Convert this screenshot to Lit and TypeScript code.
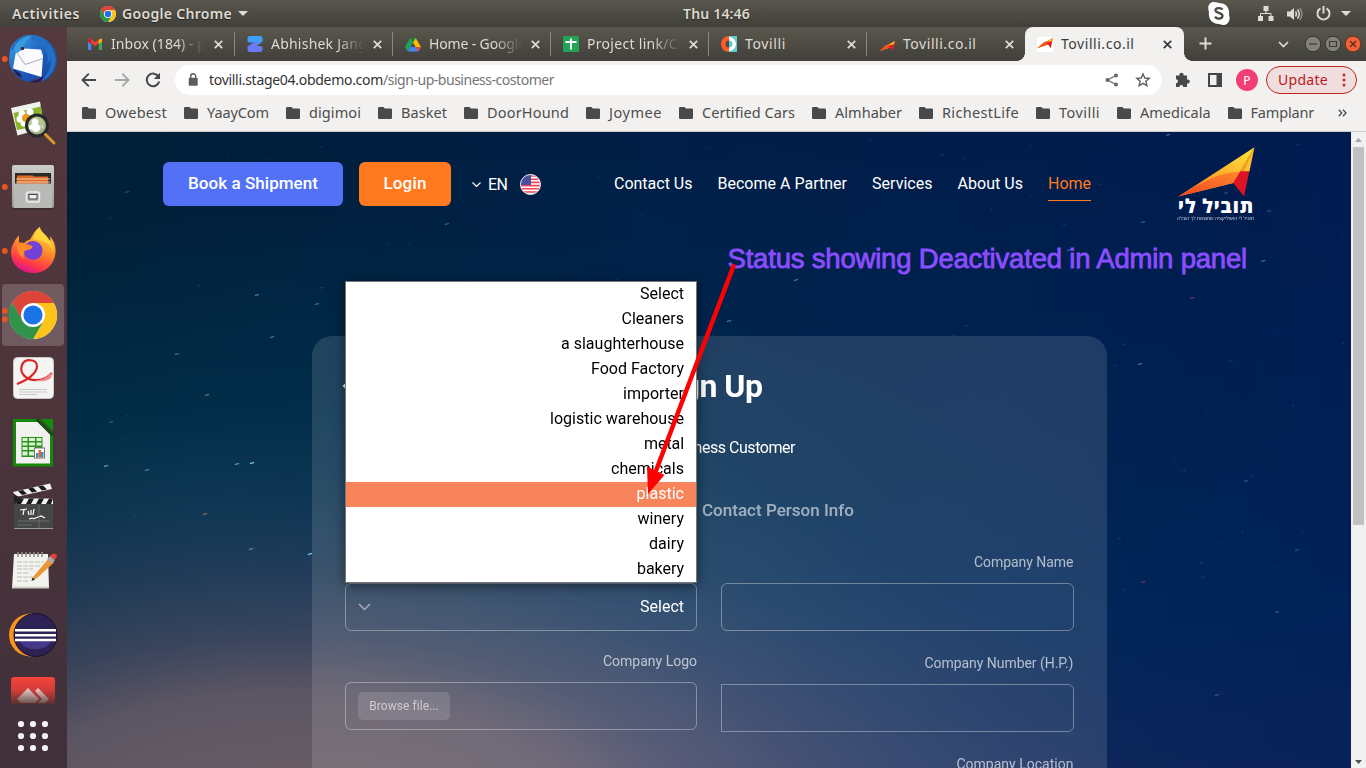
import { LitElement, html, svg, css } from "lit";
import { customElement, property } from "lit/decorators.js";
import { classMap } from "lit/directives/class-map.js";

/** A single line of text whose letter-spacing is computed so it fills `w` pixels. */
@customElement("fit-text")
class FitText extends LitElement {
  @property({ type: Number }) w = 0;
  @property() text = "";
  static styles = css`
    :host { display: block; flex: none; white-space: pre; }
    .t { display: inline-block; white-space: pre; }
  `;
  render() {
    return html`<span class="t">${this.text}</span>`;
  }
  updated() {
    const el = this.renderRoot.querySelector(".t") as HTMLElement;
    el.style.letterSpacing = "0px";
    const n = Array.from(this.text).length;
    const ls = (this.w - el.getBoundingClientRect().width) / n;
    el.style.letterSpacing = ls.toFixed(3) + "px";
  }
}

const chrome = svg`
  <circle cx="24" cy="24" r="24" fill="#fff"/>
  <path d="M24 24 3.2 12A24 24 0 0 1 44.8 12Z" fill="#dd4538"/>
  <path d="M3.2 12A24 24 0 0 0 24 48L34.4 30 24 24 13.6 30Z" fill="#2f9449"/>
  <path d="M44.8 12A24 24 0 0 1 24 48L34.4 30 24 12Z" fill="#fcc31a"/>
  <path d="M3.2 12A24 24 0 0 1 44.8 12H24L13.6 30Z" fill="#dd4538"/>
  <path d="M3.2 12A24 24 0 0 0 24 48L34.4 30 24 24 13.6 30Z" fill="#2f9449"/>
  <circle cx="24" cy="24" r="12" fill="#fff"/><circle cx="24" cy="24" r="9.6" fill="#1b73e8"/>`;

const plane = svg`
  <path d="M0 15.2 16 5 11.5 11.6Z" fill="#ff8a1c"/>
  <path d="M0 15.2 6.8 9.3 13.5 7 11.5 11.6Z" fill="#f4511e"/>
  <path d="M8.5 9 16 5 13.8 15.2 11.3 11.8Z" fill="#e01d25"/>
  <path d="M3 12.6 16 5 14.9 8.3 7.5 9.7Z" fill="#ffc21f"/>`;

const dock = [
  {
    dots: 1,
    art: svg`
      <defs><linearGradient id="tb" x1="0" y1="0" x2="1" y2="1"><stop offset="0" stop-color="#3fa9f0"/><stop offset=".5" stop-color="#1c5fbf"/><stop offset="1" stop-color="#1b3f96"/></linearGradient></defs>
      <path d="M10 22C14 14 20 9 29 8 44 7 57 18 57 33c0 10-6 18-15 22l2-4-8 4 1-4-8 4C18 53 9 44 9 32Z" fill="url(#tb)"/>
      <path d="M13 42c4 2 8 3 9 9-5-2-8-5-9-9ZM30 54c6 0 9-2 14-6l-3 6c-4 2-8 2-11 0Z" fill="#231a5c"/>
      <path d="M18 20c1-6 6-11 14-12l-1 5c8 2 12 8 12 18 2-5 1-8-1-12 5 5 7 12 5 19l4-6c0 9-4 17-10 22 12-4 18-18 13-29C49 13 39 7 29 8 19 9 12 16 10 24Z" fill="#246fc6"/>
      <path d="M16 24 24 21.500 41 22.500 43 29 41.500 50 13 41.500Z" fill="#fafafc"/>
      <path d="M16 24 25 37.500 43 31.500" stroke="#a9acb4" stroke-width="1" fill="none"/>
      <path d="M14 21c3-7 9-11 16-12l-4 5-4 9-7 4Z" fill="#3b9bdf"/>
      <circle cx="22.500" cy="21.500" r="1.800" fill="#3a2c2c"/>`,
  },
  {
    dots: 0,
    art: svg`
      <path d="M11 17 40 10.500 44 37 17.500 44.500Z" fill="#eef1ee"/>
      <path d="M13.500 22 41 15.500 43.500 34 17 39Z" fill="#8cb52e"/>
      <g fill="#fff"><circle cx="22" cy="23" r="3.500"/><circle cx="30" cy="21" r="3.500"/><circle cx="20" cy="28" r="3.500"/><circle cx="24" cy="32" r="3.500"/></g>
      <circle cx="26" cy="27" r="4" fill="#ec9a1c"/>
      <circle cx="37" cy="34.500" r="10.500" fill="#b9c7a0" fill-opacity=".85" stroke="#26282a" stroke-width="3"/>
      <g fill="#fff"><circle cx="35" cy="31" r="3.500"/><circle cx="36" cy="37" r="4"/><circle cx="31.500" cy="36" r="2.500"/></g>
      <path d="M45.500 43.500 54 52" stroke="#d99a2b" stroke-width="3" stroke-linecap="round"/>`,
  },
  {
    dots: 1,
    art: svg`
      <defs><linearGradient id="fl" x1="0" y1="0" x2="0" y2="1"><stop offset="0" stop-color="#cdcdcb"/><stop offset="1" stop-color="#9a9a98"/></linearGradient></defs>
      <rect x="12" y="10" width="42" height="43" rx="2" fill="url(#fl)"/>
      <rect x="15" y="18" width="36" height="11" fill="#2c2a28"/>
      <path d="M17 20.500h16l1 1h14v8H17Z" fill="#df6b28"/>
      <path d="M16 24h34M16 27h34" stroke="#f6cfa3" stroke-width="1.200"/>
      <rect x="14" y="28.500" width="38" height="24.500" rx="1.500" fill="#b9b9b7"/>
      <rect x="26.500" y="37" width="13" height="10" rx="2" fill="none" stroke="#ececea" stroke-width="1.500"/>
      <rect x="29" y="39.500" width="8" height="4.500" fill="#efefef" stroke="#444" stroke-width="1"/>
      <path d="M12.500 54H53" stroke="#2d2226" stroke-width="1"/>`,
  },
  {
    dots: 1,
    art: svg`
      <defs><linearGradient id="ff" x1=".8" y1="0" x2=".4" y2="1"><stop offset="0" stop-color="#ffdf3d"/><stop offset=".45" stop-color="#ff9426"/><stop offset=".8" stop-color="#ff3b45"/><stop offset="1" stop-color="#e3158a"/></linearGradient></defs>
      <path d="M19 16.500v7c2 0 3 0 5 .5 2-2 4-3 6-3.500 2-3 5-10 10-12.500 0 4 4 6 7 10l3 4c1-1 0-3 0-5 4 5 6 10 5.500 16C55 45 46 54 33.500 54 20 54 11 45 11 33.500c0-4 1-7 3-10 1-3 3-5 5-7Z" fill="url(#ff)"/>
      <circle cx="33" cy="31.500" r="9.500" fill="#7340d8"/>
      <path d="M17 27c5-3 10-2 15.500 0 0 4-5 3.500-8 5 0 3-2 5-1 8-4-3-6-8-6.500-13Z" fill="#ff8a27"/>
      <path d="M40 8c0 4 4 6 7 10 4 5 6 9 6 15-2-6-5-9-9-10l-11-3c2-3 3-9 7-12Z" fill="#ffd53a"/>`,
  },
  { dots: 2, art: svg`<g transform="translate(9 8)">${chrome}</g>` },
  {
    dots: 0,
    art: svg`
      <rect x="13.500" y="10.500" width="40" height="41" rx="4" fill="#f4f4f3" stroke="#c9c9c8"/>
      <path d="M17 37C28 33 37 26 37 19c0-7-12-8-15-1-3 8 4 16 16 15 5 0 10-3 14-7" stroke="#d8262b" stroke-width="2.200" fill="none"/>
      <path d="M34 33c8 1 13-3 18-8l-1 6c-5 4-11 4-17 2Z" fill="#ee8b86"/>
      <path d="M19 42.500h28M19 45h28M19 47.500h18" stroke="#c7c7c7" stroke-width="1"/>`,
  },
  {
    dots: 0,
    art: svg`
      <path d="M13 8h26l14 14v33.500H13Z" fill="#138a0b"/>
      <path d="M16 11h22l12 12v29.500H16Z" fill="#f1f1f0"/>
      <path d="M40.500 8h12.500v12.500Z" fill="#138a0b"/><path d="M36.500 8 53 24.500" stroke="#184c16" stroke-width="3"/>
      <rect x="21.500" y="26" width="21" height="20" fill="#2b8f1f"/>
      <g fill="#d9f5cf"><path d="M22.500 27h5v3h-5zM29 27h6v3h-6zM36.500 27h5v3h-5zM22.500 31.500h5v3h-5zM29 31.500h6v3h-6zM36.500 31.500h5v3h-5zM22.500 36h5v3h-5zM29 36h6v3h-6zM22.500 40.500h5v4h-5zM29 40.500h6v4h-6z"/></g>
      <rect x="34.500" y="37" width="10" height="10" fill="#fff" stroke="#777"/>
      <path d="M36 42h2.500v4.500H36z" fill="#3d8ccb"/><path d="M38.500 39H41v7.500h-2.500z" fill="#e0681d"/><path d="M41 41h2.500v5.500H41z" fill="#3d8ccb"/>`,
  },
  {
    dots: 0,
    art: svg`
      <path d="M13 17 50 8.500 52 14 16 22Z" fill="#f2f2f2"/>
      <path d="m18 16 5-1 4 4-5 1ZM28 13.500l5-1 4 4-5 1ZM38 11.500l5-1 4 4-5 1Z" fill="#1b1b1b"/>
      <path d="M14 24h39v29H14Z" fill="#444647"/>
      <path d="M14 23.500h39V29H14Z" fill="#f2f2f2"/>
      <path d="m19 23.500 5 0-3 5.500h-5ZM29 23.500h5L31 29h-5ZM39 23.500h5L41 29h-5ZM49 23.500h4L51 29h-5Z" fill="#1b1b1b"/>
      <path d="m14 19 8 5-8 6Z" fill="#222"/>
      <path d="m20 35 7-1M24 35l-1 5M28 36l1 4M31 35v5M34 34l-1 6M29 44l4-1M33 44l8-3 4 2" stroke="#fff" stroke-width="1.200" fill="none"/>
      <path d="M18 46h31M18 50h14M39 30v23" stroke="#777" stroke-width=".8"/>
      <path d="M14 53.500h39" stroke="#9a9a9a"/>`,
  },
  {
    dots: 0,
    art: svg`
      <path d="M14 15h34l1 34H12Z" fill="#f3f3ee"/><path d="M12 48.500h37" stroke="#cfd0c9" stroke-width="2"/>
      <path d="M18 13v5M22 13v5M26 13v5M30 13v5M34 13v5M38 13v5M42 13v5" stroke="#8d8d8a" stroke-width="1.600"/>
      <path d="M17 23h27M17 27h23M17 30h16M17 34h11M17 38h15M17 42h11" stroke="#b9b9b4" stroke-width=".9" stroke-dasharray="5 1"/>
      <path d="m33 38 16-19 5 4.500L37 39l-5 2.500Z" fill="#ed9636"/><path d="m47 20 3-3 5 4-3 3.500Z" fill="#a9a9a9"/>
      <path d="m50 17 2-2c3-2 7 2 4 4l-1.500 2Z" fill="#e2413f"/><path d="m31.500 42 1-3.500 2.500 2Z" fill="#222"/>`,
  },
  {
    dots: 0,
    art: svg`
      <circle cx="30.500" cy="32" r="21.500" fill="#f7941e"/>
      <circle cx="35.500" cy="32" r="21.500" fill="#2c2255" stroke="#160f30" stroke-width="1"/>
      <path d="M20 38c3 11 27 11 31 0Z" fill="#45378a"/>
      <path d="M15 27.300h41M15 32.300h41M15 37h41" stroke="#fff" stroke-width="2.400"/>`,
  },
];

const dockCut = svg`
  <defs><linearGradient id="an" x1="0" y1="0" x2="0" y2="1"><stop offset="0" stop-color="#f5443c"/><stop offset=".5" stop-color="#d23c38"/><stop offset="1" stop-color="#57302f"/></linearGradient>
  <linearGradient id="ag" x1="0" y1="0" x2="0" y2="1"><stop offset="0" stop-color="#f0d0cd"/><stop offset="1" stop-color="#6f5452"/></linearGradient></defs>
  <path d="M11 13a3 3 0 0 1 3-3h38a3 3 0 0 1 3 3v24H11Z" fill="url(#an)"/>
  <path d="m17 32 11-11 11 11-4 4H21ZM35 24l3-3 11 11-4 4h-7l4-4Z" fill="url(#ag)"/>`;

const gmail = svg`<path d="M1 3v11h3.200V7.200L8 10l3.800-2.800V14H15V3l-1.500-1L8 6.200 2.500 2Z" fill="#ea4335"/><path d="M1 5v9h3.200V7.300Z" fill="#4285f4"/><path d="M15 5v9h-3.200V7.300Z" fill="#34a853"/><path d="M15 3.500v2L11.800 8V4.700l1.500-1.700C14.200 2.500 15 3 15 3.500Z" fill="#fbbc04"/><path d="M1 3.500v2L4.200 8V4.700L2.700 3C1.800 2.500 1 3 1 3.500Z" fill="#c5221f"/>`;
const zed = svg`<path d="M2 0h12l1.500 1.500v4L8 11H4.500l3-4.500H2L.5 5V1.500Z" fill="#3fa0fb"/><path d="M14 16H2L.5 14.500v-4L8 5.500h3.500L8.500 10H14l1.500 1.500v3Z" fill="#6b7bf8"/>`;
const drive = svg`<path d="M5.300 2h5.400L16 11h-5.300Z" fill="#fbbc04"/><path d="M5.300 2 8 6.500 2.700 15.400 0 11Z" fill="#1ea362"/><path d="M5.300 11H16l-2.700 4.400H2.700Z" fill="#4285f4"/><path d="m10.700 11 2.600 4.400L16 11Z" fill="#ea4335"/><path d="M5.300 2h5.400L8 6.500Z" fill="#188038"/>`;
const sheet = svg`<rect width="16" height="16" rx="1.500" fill="#23a455"/><path d="M8 2.500v11M2.500 6h11" stroke="#fff" stroke-width="1.800"/>`;
const ring = svg`<path d="M8 0h8v16H8Z" fill="#5fc9cc"/><path d="M8 0a8 8 0 0 0 0 16V11.500a3.500 3.500 0 0 1 0-7Z" fill="#ff5a2b"/><path d="M8 1a7 7 0 0 1 0 14v-3.500a3.500 3.500 0 0 0 0-7Z" fill="#fff"/>`;

const tabs = [
  { icon: gmail, title: "Inbox (184) - p", w: 95, fade: true, first: true },
  { icon: zed, title: "Abhishek Jang", w: 96, fade: true },
  { icon: drive, title: "Home - Google", w: 97, fade: true },
  { icon: sheet, title: "Project link/Cr", w: 97, fade: true },
  { icon: ring, title: "Tovilli", w: 41, fade: false },
  { icon: plane, title: "Tovilli.co.il", w: 73.500, fade: false },
  { icon: svg`<rect y="1" width="16" height="15" fill="#fff"/><g transform="translate(0 -3)">${plane}</g>`, title: "Tovilli.co.il", w: 73.500, fade: false, active: true },
];

const marks: [string, number][] = [
  ["Owebest", 62], ["YaayCom", 62], ["digimoi", 52], ["Basket", 46], ["DoorHound", 82], ["Joymee", 53],
  ["Certified Cars", 93], ["Almhaber", 67], ["RichestLife", 77], ["Tovilli", 41], ["Amedicala", 70.500], ["Famplanr", 63.500],
];

const options: [string, number][] = [
  ["Select", 44], ["Cleaners", 62.500], ["a slaughterhouse", 123], ["Food Factory", 93], ["importer", 61], ["logistic warehouse", 134],
  ["metal", 40], ["chemicals", 73], ["plastic", 47.500], ["winery", 46.500], ["dairy", 35], ["bakery", 47],
];

const nav: [string, number][] = [["Contact Us", 78.500], ["Become A Partner", 129.500], ["Services", 60.500], ["About Us", 65.500], ["Home", 43]];

/** Fixed bright stars, as page coordinates: x, y, colour. */
const brightStars: [number, number, string][] = [
  [1101, 3, "#2467a3"], [1159, 61, "#1c4f86"], [1202, 79, "#38446f"], [1196, 129, "#2f6fa5"], [1073, 232, "#2c71aa"], [1076, 90, "#245a8c"],
  [1125, 166, "#594268"], [1002, 118, "#266aa3"], [662, 189, "#3079ab"], [729, 148, "#3079ab"], [135, 59, "#72715f"], [39, 334, "#579bc4"],
  [80, 338, "#3b83ad"], [185, 331, "#78c0ee"], [243, 422, "#78c0ee"], [170, 332, "#4f94c6"], [138, 382, "#88635f"], [184, 417, "#7e7780"], [1076, 450, "#5a3b63"],
  [190, 163, "#357da0"], [250, 172, "#287099"], [140, 263, "#6a6c64"], [110, 222, "#2e6f8f"], [44, 290, "#315f77"], [205, 205, "#2d7795"],
  [1179, 349, "#20558a"], [1230, 418, "#2a4f84"], [1150, 563, "#3d4c7f"], [1210, 480, "#24558c"], [380, 92, "#21668c"], [60, 60, "#1c506b"],
];

const faintStars = (() => {
  let s = 7;
  const r = () => (s = (s * 16807) % 2147483647) / 2147483647;
  return Array.from({ length: 150 }, () => [r() * 1284, r() * 500, 0.8 + r() * 1.500, 0.06 + r() * 0.24]);
})();

@customElement("app-root")
class AppRoot extends LitElement {
  static styles = css`
    :host { display: block; width: 1366px; height: 768px; overflow: hidden; font-family: Roboto, sans-serif; }
    * { box-sizing: border-box; }
    svg { display: block; flex: none; }
    .screen { display: grid; grid-template: 27px 741px / 67px 1299px; width: 1366px; height: 768px; position: relative; overflow: hidden; }
    .ui { font-family: "Noto Sans", "Open Sans", sans-serif; }
    .topbar { grid-column: 1 / 3; background: linear-gradient(#5b574e, #403f3a); color: #dfdbd2; display: grid; grid-template-columns: 671px auto 1fr; align-items: center; font-size: 14px; font-weight: 600; text-shadow: 0 1px 1px #22211e; padding: 0 15px 0 12px; }
    .topbar fit-text { margin-top: -1px; }
    .left, .right { display: flex; align-items: center; }
    .left { gap: 20px; }
    .app { display: flex; align-items: center; gap: 6px; }
    .right { justify-content: flex-end; gap: 13px; }
    .right .skype { margin-right: 15px; }
    .right .power { margin-right: -3px; }
    .dock { background: linear-gradient(#54393e, #4e353b 45%, #40303a); display: flex; flex-direction: column; overflow: hidden; }
    .cell { height: 64px; flex: none; }
    .cut { height: 37px; overflow: hidden; }
    .apps { margin-top: 15px; }
    .browser { display: grid; grid-template-rows: 34px 71px 636px; min-width: 0; }
    .strip { background: linear-gradient(#5b574e, #403f3a); display: flex; padding-left: 10px; align-items: stretch; }
    .tab { width: 158px; display: flex; align-items: center; padding-left: 12px; color: #dfdbd2; font-size: 14px; position: relative; flex: none; }
    .tab fit-text { margin-top: -2px; }
    .tab.first { padding-left: 10px; }
    .tab.sep { border-right: 1px solid #8b8881; border-image: linear-gradient(transparent 18%, #8b8881 18%, #8b8881 82%, transparent 82%) 1; }
    .tab.active { background: #f2f1f0; color: #3b3b3b; border-radius: 8px 8px 0 0; width: 159px; }
    .tab.active::before, .tab.active::after { content: ""; position: absolute; bottom: 0; width: 8px; height: 8px; }
    .tab.active::before { left: -8px; background: radial-gradient(circle at 0 0, transparent 7.500px, #f2f1f0 8px); }
    .tab.active::after { right: -8px; background: radial-gradient(circle at 100% 0, transparent 7.500px, #f2f1f0 8px); }
    .title { width: 95px; margin: 0 7px 0 8px; overflow: hidden; flex: none; }
    .first .title { margin-right: 8px; }
    .title.fade { -webkit-mask-image: linear-gradient(90deg, #000 68%, transparent 98%); mask-image: linear-gradient(90deg, #000 68%, transparent 98%); }
    .plus { margin: 10px 0 0 15px; }
    .ctl { display: flex; align-items: center; gap: 4px; margin-left: auto; padding-right: 5px; }
    .ctl .down { margin-right: 12px; }
    .bar { background: #f2f1f0; border-bottom: 1px solid #cfcdca; }
    .tools { height: 38px; display: flex; align-items: center; padding: 0 9px 0 14px; color: #474747; }
    .tools > svg { margin-right: 14px; }
    .tools .fwd { margin-right: 12px; }
    .omni { width: 987px; height: 30px; margin: 0; background: #fff; border-radius: 15px; display: flex; align-items: center; padding: 0 11px 0 10px; font-size: 14px; color: #333; }
    .omni fit-text { margin-top: -2px; }
    .omni .lock { margin-right: 8px; }
    .path { color: #757575; }
    .omni .share { margin-left: auto; margin-right: 16px; }
    .tools .puzzle { margin: 0 16px 0 12px; }
    .avatar { width: 22px; height: 22px; border-radius: 50%; background: #f03e77; color: #fff; font-size: 12px; display: flex; align-items: center; justify-content: center; }
    .update { margin-left: 8px; width: 91px; height: 28px; border: 1px solid #c5221f; border-radius: 14px; background: #efdedd; color: #b9191d; font-size: 14px; display: flex; align-items: center; padding: 0 10px 0 11px; justify-content: space-between; }
    .update fit-text { margin-top: -2px; }
    .marks { display: flex; height: 28px; align-items: center; padding-left: 15px; color: #4d4d4d; font-size: 14.500px; line-height: 18px; gap: 17px; }
    .mark { display: flex; gap: 9px; align-items: center; }
    .mark svg { margin-top: -1px; }
    .mark fit-text { margin-top: -3px; }
    .more { margin-left: 7px; }
    .view { display: grid; grid-template-columns: 1284px 15px; overflow: hidden; }
    .page { position: relative; height: 636px; overflow: hidden; color: #fff; background:
      radial-gradient(ellipse 850px 450px at 220px 730px, rgba(122,104,104,.96), rgba(112,95,106,.8) 38%, rgba(100,88,108,.56) 50%, rgba(88,80,108,.33) 66%, rgba(74,78,106,.15) 81%, transparent 100%),
      radial-gradient(ellipse 700px 300px at 130px 380px, rgba(6,66,96,.5), transparent 100%),
      linear-gradient(90deg, rgba(0,31,50,.75), transparent 45%, rgba(0,24,88,.55) 100%),
      linear-gradient(#001e46, #00284e 50%, #002d58 75%, #142e5c 100%); }
    .sky { position: absolute; inset: 0; }
    .header { position: relative; display: flex; align-items: center; height: 104px; padding-left: 96px; font-size: 16px; }
    .btn { height: 44px; border-radius: 6px; display: flex; align-items: center; justify-content: center; font-weight: 500; font-size: 17px; padding-bottom: 2px; }
    .book { width: 180px; background: #5271f7; }
    .login { width: 92px; background: #ff7a1f; margin: 0 20px 0 16px; }
    .lang { display: flex; align-items: center; gap: 6px; width: 143px; }
    .lang .flag { margin-left: 6px; }
    .nav { display: flex; gap: 25px; }
    .nav .on { color: #ff7a1f; border-bottom: 1px solid #ff7a1f; }
    .nav .item { padding-top: 7px; height: 34px; }
    .logo { margin: 0 0 0 86px; display: flex; flex-direction: column; width: 80px; }
    .brand { font-family: "Open Sans", "DejaVu Sans", sans-serif; font-weight: 800; font-size: 19px; line-height: 19px; margin: 0 0 0 -2px; direction: rtl; width: 79px; }
    .tag { font-family: "Open Sans", "DejaVu Sans", sans-serif; font-size: 5px; line-height: 7px; opacity: .8; margin-top: -1px; }
    .card { position: relative; margin: 100px 0 0 245px; width: 795px; height: 460px; background: rgba(255,255,255,.125); -webkit-backdrop-filter: blur(6px); backdrop-filter: blur(6px); border-radius: 20px 20px 0 0; padding: 31px 33px; }
    .heading { display: grid; grid-template-columns: 40px 1fr 40px; height: 37px; align-items: center; margin-left: -3px; margin-right: 3px; }
    .heading fit-text { justify-self: center; font-size: 32px; font-weight: 700; padding-left: 4px; }
    .kind { display: flex; justify-content: flex-end; padding-right: 279px; margin-top: 34px; height: 19px; font-size: 16px; line-height: 19px; }
    .step { display: flex; justify-content: flex-end; padding-right: 220px; margin-top: 43px; height: 20px; font-size: 17px; line-height: 20px; font-weight: 500; color: rgba(255,255,255,.58); }
    .form { display: grid; grid-template-columns: 352px 353px; gap: 24px; margin-top: 32px; }
    .col { display: flex; flex-direction: column; }
    .label { height: 20px; line-height: 20px; font-size: 14px; color: rgba(255,255,255,.65); display: flex; justify-content: flex-end; }
    .colR .label { padding-right: .6px; }
    .field { height: 48px; border: 1px solid rgba(255,255,255,.35); border-radius: 6px; margin-top: 11px; display: flex; align-items: center; justify-content: space-between; padding: 0 12px 1px; font-size: 16px; }
    .colL .field { margin-bottom: 20px; }
    .colR .field { margin-bottom: 22px; }
    .half { border-radius: 0 6px 6px 0; }
    .browse { width: 92px; height: 28px; border-radius: 5px; background: rgba(255,255,255,.13); color: rgba(255,255,255,.6); font-size: 12px; display: flex; align-items: center; justify-content: center; }
    .menu { position: absolute; left: 278px; top: 149px; width: 352px; height: 302px; border: 1px solid #767676; background: #fff; color: #000; font-size: 16px; box-shadow: 0 3px 12px rgba(0,0,0,.5); }
    .opt { height: 25px; line-height: 24px; padding-right: 12px; display: flex; justify-content: flex-end; }
    .opt.hot { background: #f8845c; color: #fff; }
    .note { position: absolute; left: 660.500px; top: 111px; color: #8c4dff; font: 27.500px/32px "Liberation Sans", Arial, sans-serif; -webkit-text-stroke: .8px #8c4dff; }
    .arrow { position: absolute; left: 0; top: 0; pointer-events: none; }
    .scroll { background: #f1f1f1; display: flex; flex-direction: column; align-items: center; }
    .thumb { width: 11px; height: 378px; background: #c1c1c1; margin-top: 5px; }
    .scroll .dn { margin-top: auto; margin-bottom: 4px; }
    .scroll .up { margin-top: 6px; }
  `;

  private topbar() {
    return html`<div class="topbar ui">
      <div class="left">
        <fit-text w="68" text="Activities"></fit-text>
        <div class="app">
          <svg width="16" height="16" viewBox="0 0 48 48">${chrome}</svg>
          <fit-text w="110" text="Google Chrome"></fit-text>
          <svg width="10" height="5" viewBox="0 0 10 5"><path d="M0 0h10L5 5Z" fill="#dfdbd2"/></svg>
        </div>
      </div>
      <fit-text w="67" text="Thu 14:46"></fit-text>
      <div class="right">
        <svg class="skype" width="22" height="23" viewBox="0 0 22 23"><path d="M6 0c2 0 4 1 5 1 7 0 11 5 10 12 2 5-1 10-6 10-2 0-3-1-4-1C4 22 0 17 1 10-1 5 1 0 6 0Z" fill="#fff"/><path d="M14.500 7.600C13 5.500 7.500 5.600 7.500 8.500s7 2 7 5.300-5.500 3.700-7.500 1" fill="none" stroke="#4b4943" stroke-width="2.300"/></svg>
        <svg width="16" height="15" viewBox="0 0 16 15"><path d="M5.500 0h5v5h-5zM0 10h5v5H0zM10.500 10h5v5h-5z" fill="#dfdbd2"/><path d="M8 5v2.500M2.500 10V7.500h10.500V10" stroke="#dfdbd2" fill="none"/></svg>
        <svg width="16" height="14" viewBox="0 0 16 14"><path d="M0 4.500h3L7 1v12L3 9.500H0Z" fill="#dfdbd2"/><path d="M8.500 4.500q2 2.500 0 5M10.500 2.500q3.500 4.500 0 9" stroke="#dfdbd2" fill="none" stroke-width="1.500"/><path d="M12.700 1q4.300 6 0 12" stroke="#8e8b85" fill="none" stroke-width="1.500"/></svg>
        <svg class="power" width="15" height="15" viewBox="0 0 15 15"><path d="M4.500 2.400a6 6 0 1 0 6 0M7.500 0v7.500" stroke="#dfdbd2" stroke-width="1.900" fill="none"/></svg>
        <svg width="10" height="5" viewBox="0 0 10 5"><path d="M0 0h10L5 5Z" fill="#dfdbd2"/></svg>
      </div>
    </div>`;
  }

  private dock() {
    return html`<div class="dock">
      ${dock.map((d, i) => html`<svg class="cell" width="67" height="64" viewBox="0 0 67 64">
        ${i === 4 ? svg`<rect x="2" y="1" width="62" height="62" rx="4" fill="#fff" fill-opacity=".19"/>` : ""}
        ${d.dots === 1 ? svg`<circle cx="4.800" cy="32" r="2.900" fill="#e95420"/>` : ""}
        ${d.dots === 2 ? svg`<circle cx="4.800" cy="27.800" r="2.900" fill="#e95420"/><circle cx="4.800" cy="36.300" r="2.900" fill="#e95420"/>` : ""}
        ${d.art}</svg>`)}
      <svg class="cut" width="67" height="37" viewBox="0 0 67 37">${dockCut}</svg>
      <svg class="apps" width="67" height="36" viewBox="0 0 67 36" fill="#f4f2f2">
        ${[21, 33, 45].map((x) => [5, 17, 29].map((y) => svg`<circle cx=${x} cy=${y} r="3.100"/>`))}
      </svg>
    </div>`;
  }

  private x(c: string) {
    return html`<svg width="9" height="9" viewBox="0 0 9 9"><path d="m.8.8 7.400 7.400M8.200.8.800 8.200" stroke=${c} stroke-width="1.800"/></svg>`;
  }

  private strip() {
    return html`<div class="strip ui">
      ${tabs.map((t, i) => html`<div class=${classMap({ tab: true, first: i === 0, active: !!t.active, sep: i < 5 })}>
        <svg width="16" height="16" viewBox="0 0 16 16">${t.icon}</svg>
        <div class=${classMap({ title: true, fade: t.fade })}><fit-text w=${t.w} text=${t.title}></fit-text></div>
        ${this.x(t.active ? "#3b3b3b" : "#dfdbd2")}
      </div>`)}
      <svg class="plus" width="13" height="13" viewBox="0 0 13 13"><path d="M6.500.5v12M.5 6.500h12" stroke="#dfdbd2" stroke-width="2"/></svg>
      <div class="ctl">
        <svg class="down" width="11" height="7" viewBox="0 0 11 7"><path d="m1 1 4.500 4.500L10 1" fill="none" stroke="#dfdbd2" stroke-width="1.700"/></svg>
        <svg width="16" height="16" viewBox="0 0 16 16"><circle cx="8" cy="8" r="7.800" fill="#83817b" stroke="#34332f"/><path d="M4 8h8" stroke="#3b3a36" stroke-width="1.200"/></svg>
        <svg width="16" height="16" viewBox="0 0 16 16"><circle cx="8" cy="8" r="7.800" fill="#83817b" stroke="#34332f"/><path d="M4.500 5.500h7v5h-7z" fill="none" stroke="#3b3a36" stroke-width="1.200"/></svg>
        <svg width="16" height="16" viewBox="0 0 16 16"><circle cx="8" cy="8" r="7.800" fill="#f0633a" stroke="#7a2e18"/><path d="m5 5 6 6M11 5l-6 6" stroke="#5d2a1a" stroke-width="1.300"/></svg>
      </div>
    </div>`;
  }

  private bar() {
    return html`<div class="bar ui">
      <div class="tools">
        <svg width="16" height="14" viewBox="0 0 16 14" fill="none" stroke="#474747" stroke-width="1.900"><path d="M15 7H2M7.800.7 1.500 7l6.300 6.300"/></svg>
        <svg class="fwd" width="22" height="14" viewBox="-4 0 22 14" fill="none" stroke="#a7a6a5" stroke-width="1.900"><path d="M0 7h13M7.200.7 13.500 7l-6.300 6.300"/></svg>
        <svg width="16" height="16" viewBox="0 0 16 16"><path d="M13.700 5A6.300 6.300 0 1 0 14.200 9.500" fill="none" stroke="#474747" stroke-width="2"/><path d="M15 .8V7H8.800Z" fill="#474747"/></svg>
        <div class="omni">
          <svg class="lock" width="16" height="14" viewBox="0 0 16 14"><rect x="3.700" y="4.700" width="9" height="8" rx="1" fill="#5a5d61"/><path d="M5.700 5V3.300a2.500 2.500 0 0 1 5 0V5" fill="none" stroke="#5a5d61" stroke-width="1.400"/></svg>
          <fit-text w="174" text="tovilli.stage04.obdemo.com"></fit-text>
          <fit-text class="path" w="171" text="/sign-up-business-costomer"></fit-text>
          <svg class="share" width="14" height="14" viewBox="0 0 14 14" fill="#666"><path d="M11 2.500 2.500 7l8.500 4.500" fill="none" stroke="#666" stroke-width="1.200"/><circle cx="11" cy="2.500" r="2"/><circle cx="2.500" cy="7" r="2"/><circle cx="11" cy="11.500" r="2"/></svg>
          <svg width="16" height="16" viewBox="0 0 16 16"><path d="m8 2 1.800 4 4.400.4-3.300 2.900 1 4.300L8 11.300l-3.900 2.300 1-4.300L1.800 6.400 6.200 6Z" fill="none" stroke="#5f5f5f" stroke-width="1.400"/></svg>
        </div>
        <svg class="puzzle" width="18" height="16" viewBox="0 0 18 16"><path d="M2 3.500h3.500a2.100 2.100 0 1 1 4 0H13V7.500a2.100 2.100 0 1 1 0 4V15H9.300a2 2 0 0 0-4 0H2v-3.700a2 2 0 0 0 0-4Z" fill="#474747"/></svg>
        <svg width="14" height="14" viewBox="0 0 14 14"><path d="M0 0h14v14H0zM2 2v10h6.500V2Z" fill="#474747" fill-rule="evenodd"/></svg>
        <div class="avatar">P</div>
        <div class="update"><fit-text w="50" text="Update"></fit-text><svg width="4" height="14" viewBox="0 0 4 14" fill="#d32f2f"><circle cx="2" cy="2" r="1.600"/><circle cx="2" cy="7" r="1.600"/><circle cx="2" cy="12" r="1.600"/></svg></div>
      </div>
      <div class="marks">
        ${marks.map(([t, w]) => html`<div class="mark"><svg width="14" height="12" viewBox="0 0 14 12"><path d="M1.200 0H5.500l1.500 1.600h5.800a1.200 1.200 0 0 1 1.200 1.200v8a1.200 1.200 0 0 1-1.200 1.200H1.200A1.200 1.200 0 0 1 0 10.800V1.200A1.200 1.200 0 0 1 1.200 0Z" fill="#4a4a4a"/></svg><fit-text w=${w} text=${t}></fit-text></div>`)}
        <svg class="more" width="9" height="8" viewBox="0 0 9 8"><path d="m.8.8 3 3.200-3 3.200M5 .8 8 4 5 7.200" fill="none" stroke="#4a4a4a" stroke-width="1.300"/></svg>
      </div>
    </div>`;
  }

  private header() {
    return html`<div class="header">
      <div class="btn book"><fit-text w="130" text="Book a Shipment"></fit-text></div>
      <div class="btn login"><fit-text w="43" text="Login"></fit-text></div>
      <div class="lang">
        <svg width="11" height="7" viewBox="0 0 11 7"><path d="M1.500 1.500 5.500 5.500 9.500 1.500" fill="none" stroke="#fff" stroke-width="1.200"/></svg>
        <fit-text w="19.500" text="EN"></fit-text>
        <svg class="flag" width="21" height="21" viewBox="0 0 21 21"><defs><clipPath id="fc"><circle cx="10.500" cy="10.500" r="10"/></clipPath></defs><g clip-path="url(#fc)"><path d="M0 0h21v21H0Z" fill="#fff"/><path d="M0 2h21M0 5.200h21M0 8.400h21M0 11.600h21M0 14.800h21M0 18h21" stroke="#ef4358" stroke-width="1.600"/><path d="M0 0h11v11H0Z" fill="#46519f"/></g><circle cx="10.500" cy="10.500" r="10" fill="none" stroke="#e9e6ef" stroke-width="1"/></svg>
      </div>
      <div class="nav">${nav.map(([t, w]) => html`<div class=${classMap({ item: true, on: t === "Home" })}><fit-text w=${w} text=${t}></fit-text></div>`)}</div>
      <div class="logo">
        <svg width="78" height="50" viewBox="0 0 78 50">
          <defs><linearGradient id="l1" x1="0" y1="1" x2="1" y2="0"><stop offset="0" stop-color="#ff7a1c"/><stop offset=".5" stop-color="#ffae2b"/><stop offset="1" stop-color="#ffe93a"/></linearGradient>
          <linearGradient id="l2" x1="0" y1="1" x2="1" y2="0"><stop offset="0" stop-color="#f04423"/><stop offset="1" stop-color="#ff8a2c"/></linearGradient></defs>
          <path d="M1.300 49.500 77.500.3 56.300 36Z" fill="url(#l1)"/>
          <path d="M1.300 49.500C28 33 45 25 65 24.500L56.300 36Z" fill="url(#l2)"/>
          <path d="M77.500.3 62.800 25h9.500Z" fill="#ffc12f"/>
          <path d="M77.500.3 62.800 25h4Z" fill="#f59f1f"/>
          <path d="M63.300 24.300h9L67 49.500 56.300 36Z" fill="#dc1426"/>
        </svg>
        <fit-text class="brand" w="76" text="תוביל לי"></fit-text>
        <fit-text class="tag" w="77" text="תוביל לי האפליקציה שמוצאת לך הובלה"></fit-text>
      </div>
    </div>`;
  }

  private page() {
    const label = (t: string, w: number) => html`<div class="label"><fit-text w=${w} text=${t}></fit-text></div>`;
    return html`<div class="page">
      <svg class="sky" width="1284" height="636" viewBox="0 0 1284 636">
        ${faintStars.map(([x, y, w, o]) => svg`<ellipse cx=${x} cy=${y} rx=${w} ry=".8" fill="#2f8fc0" fill-opacity=${o * 0.8}/>`)}
        ${brightStars.map(([x, y, c]) => svg`<path d=${`M${x - 1.5} ${y + 0.4} l3 -.8`} stroke=${c} stroke-width="1.500" stroke-linecap="round"/>`)}
      </svg>
      ${this.header()}
      <div class="card">
        <div class="heading">
          <svg width="22" height="14" viewBox="0 0 22 14"><path d="M21 7H2M7 2 2 7l5 5" fill="none" stroke="#fff" stroke-width="2"/></svg>
          <fit-text w="108" text="Sign Up"></fit-text>
        </div>
        <div class="kind"><fit-text w="130.500" text="Business Customer"></fit-text></div>
        <div class="step"><fit-text w="152" text="Contact Person Info"></fit-text></div>
        <div class="form">
          <div class="col colL">
            <div class="label"></div>
            <div class="field"><svg width="13" height="8" viewBox="0 0 13 8"><path d="m1 1 5.500 5.500L12 1" fill="none" stroke="#a8adba" stroke-width="1.500"/></svg><fit-text w="44" text="Select"></fit-text></div>
            ${label("Company Logo", 94)}
            <div class="field"><div class="browse"><fit-text w="69" text="Browse file..."></fit-text></div></div>
          </div>
          <div class="col colR">
            ${label("Company Name", 99.5)}
            <div class="field"></div>
            ${label("Company Number (H.P.)", 149)}
            <div class="field half"></div>
            ${label("Company Location", 117)}
          </div>
        </div>
      </div>
      <div class="menu">${options.map(([t, w]) => html`<div class=${classMap({ opt: true, hot: t === "plastic" })}><fit-text w=${w} text=${t}></fit-text></div>`)}</div>
      <fit-text class="note" w="519.500" text="Status showing Deactivated in Admin panel"></fit-text>
      <svg class="arrow" width="700" height="400" viewBox="0 0 700 400"><path d="M666.500 134 588.500 340" stroke="#f00" stroke-width="4.500" stroke-linecap="round"/><path d="M580 334.500 597.500 343 581 362Z" fill="#f00"/></svg>
    </div>`;
  }

  render() {
    return html`<div class="screen">
      ${this.topbar()}
      ${this.dock()}
      <div class="browser">
        ${this.strip()}
        ${this.bar()}
        <div class="view">
          ${this.page()}
          <div class="scroll">
            <svg class="up" width="7" height="4" viewBox="0 0 7 4"><path d="M0 4h7L3.500 0Z" fill="#a3a3a3"/></svg>
            <div class="thumb"></div>
            <svg class="dn" width="7" height="4" viewBox="0 0 7 4"><path d="M0 0h7L3.500 4Z" fill="#505050"/></svg>
          </div>
        </div>
      </div>
    </div>`;
  }
}
